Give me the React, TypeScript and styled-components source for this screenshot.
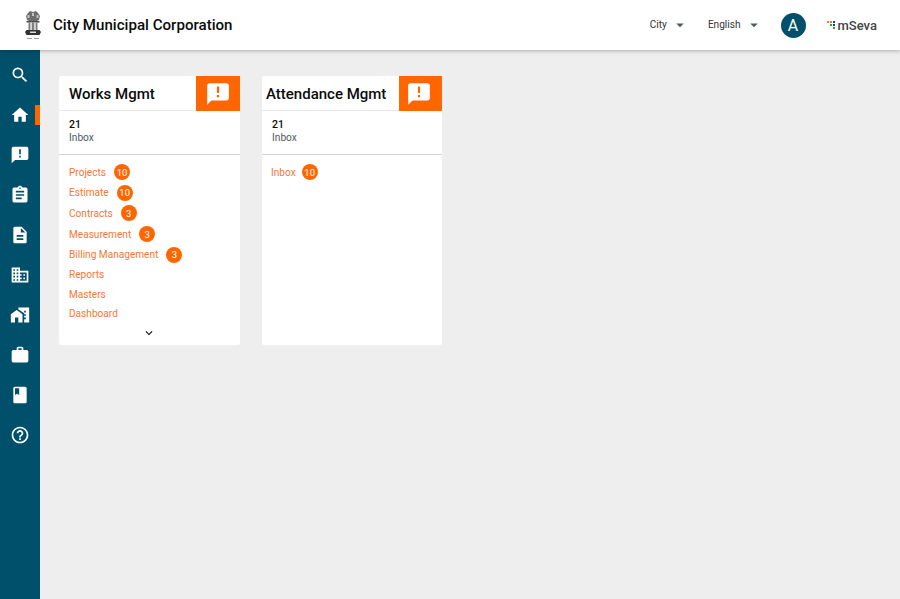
import styled, { createGlobalStyle } from 'styled-components'
import {
  MdSearch,
  MdHome,
  MdAnnouncement,
  MdAssignment,
  MdDescription,
  MdBusiness,
  MdHomeWork,
  MdWork,
  MdBook,
  MdHelpOutline,
  MdArrowDropDown,
  MdKeyboardArrowDown,
} from 'react-icons/md'

const GlobalStyle = createGlobalStyle`
  html, body {
    margin: 0;
    padding: 0;
    height: 100%;
    overflow: hidden;
    background: #eeeeee;
    font-family: Roboto, "Liberation Sans", sans-serif;
  }
  #root {
    height: 100%;
  }
  * {
    box-sizing: border-box;
  }
`

const Page = styled.div`
  display: flex;
  flex-direction: column;
  height: 599px;
`

const Header = styled.header`
  position: relative;
  z-index: 2;
  flex: 0 0 50px;
  display: flex;
  align-items: center;
  background: #fff;
  box-shadow: 0 1px 4px rgba(0, 0, 0, 0.28);
  padding: 0 23px 0 23px;
`

const Brand = styled.div`
  display: flex;
  align-items: center;
  gap: 10px;
  flex: 1;
`

const CityName = styled.h1`
  margin: 0 0 1px;
  font-size: 15.1px;
  font-weight: 500;
  color: #0b0c0c;
`

const Dropdown = styled.div<{ $gap: number }>`
  display: flex;
  align-items: center;
  margin: 0 ${({ $gap }) => $gap}px 1px 0;
  font-size: 10.1px;
  color: #333;

  svg {
    margin-left: 4px;
    color: #505a5f;
  }
`

const Avatar = styled.div`
  width: 25px;
  height: 25px;
  border-radius: 50%;
  background: #00506b;
  color: #fff;
  font-size: 16px;
  display: flex;
  align-items: center;
  justify-content: center;
  margin-right: 21px;
`

const MSeva = styled.div`
  display: flex;
  align-items: center;
  gap: 2px;
  font-size: 13px;
  font-weight: 500;
  color: #444;
`

const Body = styled.div`
  flex: 1;
  display: flex;
  min-height: 0;
`

const Sidebar = styled.nav`
  flex: 0 0 40px;
  background: #00506b;
  display: flex;
  flex-direction: column;
  padding-top: 5px;
`

const NavItem = styled.div<{ $active?: boolean }>`
  position: relative;
  height: 40px;
  display: flex;
  align-items: center;
  justify-content: center;
  color: #fff;
  font-size: 20px;

  ${({ $active }) =>
    $active &&
    `
    &::after {
      content: '';
      position: absolute;
      right: 0;
      top: 10px;
      width: 5px;
      height: 20px;
      background: #ff6600;
    }
  `}
`

const Main = styled.main`
  flex: 1;
  display: flex;
  align-items: flex-start;
  gap: 22px;
  padding: 26px 19px;
`

const Card = styled.section`
  width: 180.5px;
  height: 269px;
  background: #fff;
  border-radius: 2px;
  display: flex;
  flex-direction: column;
`

const CardHead = styled.div`
  flex: 0 0 35px;
  display: flex;
  align-items: flex-start;
  justify-content: space-between;
  border-bottom: 1px solid #e8e8e8;
`

const CardTitle = styled.h2<{ $inset: number }>`
  margin: 0;
  padding: 3px 0 0 ${({ $inset }) => $inset}px;
  font-size: 15px;
  line-height: 30px;
  font-weight: 500;
  color: #0b0c0c;
  white-space: nowrap;
`

const AlertTile = styled.div<{ $nudge?: number }>`
  flex: 0 0 43.5px;
  height: 35px;
  margin-bottom: -1px;
  padding-right: ${({ $nudge }) => $nudge ?? 0}px;
  background: #ff6600;
  color: #fff;
  display: flex;
  align-items: center;
  justify-content: center;
  font-size: 26px;
`

const Kpi = styled.div<{ $inset: number }>`
  flex: 0 0 44px;
  padding: 8px 0 0 ${({ $inset }) => $inset}px;
  border-bottom: 1px solid #d6d5d4;
`

const KpiValue = styled.div`
  font-size: 10.5px;
  line-height: 12px;
  font-weight: 500;
  color: #0b0c0c;
`

const KpiLabel = styled.div`
  font-size: 10.2px;
  line-height: 14px;
  color: #505a5f;
`

const Links = styled.ul<{ $inset: number }>`
  list-style: none;
  margin: 0;
  padding: 7px 0 0 ${({ $inset }) => $inset}px;
`

const LinkRow = styled.li<{ $tall?: boolean }>`
  display: flex;
  align-items: center;
  height: ${({ $tall }) => ($tall ? 20.6 : 19.4)}px;
`

const LinkText = styled.a`
  font-size: 10.1px;
  color: #f47738;
`

const Count = styled.span<{ $offset: number }>`
  width: 16px;
  height: 16px;
  margin-left: ${({ $offset }) => $offset}px;
  border-radius: 50%;
  background: #ff6600;
  color: #fff;
  font-size: 9.5px;
  display: flex;
  align-items: center;
  justify-content: center;
`

const More = styled.div`
  display: flex;
  justify-content: center;
  margin-top: 3px;
  font-size: 14px;
  color: #0b0c0c;
`

// small state emblem, only as much detail as the header logo shows at this size
const Emblem = () => (
  <svg width="20" height="31" viewBox="0 0 20 31">
    <path d="M5 3l2-2 3 1 3-1 2 2 2 3-1 4-2 1H6l-2-1-1-4z" fill="#6e6e6e" />
    <path d="M4.5 5h2v3h-2zM9 3h2v3H9zM13.5 5h2v3h-2z" fill="#c4c4c4" />
    <path d="M3.5 11h13v1.5h-13z" fill="#4a4a4a" />
    <path d="M5.5 12.5h2v7.5h-2zM9 12.5h2V20H9zM12.5 12.5h2V20h-2z" fill="#7d7d7d" />
    <path d="M7.5 12.5H9V20H7.5zM11 12.5h1.500V20H11z" fill="#d4d4d4" />
    <path d="M3.500 20h13l1.500 2-1.500 3h-13L2 22z" fill="#333" />
    <path d="M7 21.500h6V23H7z" fill="#dcdcdc" />
    <path d="M4 28h5v1H4zM11 28h5v1h-5z" fill="#a0a0a0" />
  </svg>
)

const MSevaMark = () => (
  <svg width="9" height="9" viewBox="0 0 9 9">
    <rect x="0" y="0" width="2" height="2" fill="#f47738" />
    <rect x="3" y="0" width="2" height="2" fill="#f47738" />
    <rect x="6" y="0" width="2" height="2" fill="#00506b" />
    <rect x="3" y="3" width="2" height="2" fill="#2e9e5b" />
    <rect x="6" y="3" width="2" height="2" fill="#00506b" />
    <rect x="6" y="6" width="2" height="2" fill="#2e9e5b" />
  </svg>
)

const navIcons = [
  { icon: <MdSearch />, id: 'search' },
  { icon: <MdHome />, id: 'home', active: true },
  { icon: <MdAnnouncement />, id: 'complaints' },
  { icon: <MdAssignment />, id: 'tasks' },
  { icon: <MdDescription />, id: 'docs' },
  { icon: <MdBusiness />, id: 'org' },
  { icon: <MdHomeWork />, id: 'property' },
  { icon: <MdWork />, id: 'work' },
  { icon: <MdBook />, id: 'book' },
  { icon: <MdHelpOutline />, id: 'help' },
]

const worksLinks = [
  { label: 'Projects', count: 10 },
  { label: 'Estimate', count: 10 },
  { label: 'Contracts', count: 3 },
  { label: 'Measurement', count: 3 },
  { label: 'Billing Management', count: 3 },
  { label: 'Reports' },
  { label: 'Masters' },
  { label: 'Dashboard' },
]

const App = () => (
  <Page>
    <GlobalStyle />
    <Header>
      <Brand>
        <Emblem />
        <CityName>City Municipal Corporation</CityName>
      </Brand>
      <Dropdown $gap={19}>
        City
        <MdArrowDropDown size={18} />
      </Dropdown>
      <Dropdown $gap={18}>
        English
        <MdArrowDropDown size={18} />
      </Dropdown>
      <Avatar>A</Avatar>
      <MSeva>
        <MSevaMark />
        mSeva
      </MSeva>
    </Header>
    <Body>
      <Sidebar>
        {navIcons.map((item) => (
          <NavItem key={item.id} $active={item.active}>
            {item.icon}
          </NavItem>
        ))}
      </Sidebar>
      <Main>
        <Card>
          <CardHead>
            <CardTitle $inset={10}>Works Mgmt</CardTitle>
            <AlertTile>
              <MdAnnouncement />
            </AlertTile>
          </CardHead>
          <Kpi $inset={10}>
            <KpiValue>21</KpiValue>
            <KpiLabel>Inbox</KpiLabel>
          </Kpi>
          <Links $inset={10}>
            {worksLinks.map((link) => (
              <LinkRow key={link.label} $tall={link.count !== undefined}>
                <LinkText>{link.label}</LinkText>
                {link.count !== undefined && <Count $offset={8}>{link.count}</Count>}
              </LinkRow>
            ))}
          </Links>
          <More>
            <MdKeyboardArrowDown />
          </More>
        </Card>
        <Card>
          <CardHead>
            <CardTitle $inset={4.5}>Attendance Mgmt</CardTitle>
            <AlertTile $nudge={3}>
              <MdAnnouncement />
            </AlertTile>
          </CardHead>
          <Kpi $inset={10.5}>
            <KpiValue>21</KpiValue>
            <KpiLabel>Inbox</KpiLabel>
          </Kpi>
          <Links $inset={9.5}>
            <LinkRow $tall>
              <LinkText>Inbox</LinkText>
              <Count $offset={6}>10</Count>
            </LinkRow>
          </Links>
        </Card>
      </Main>
    </Body>
  </Page>
)

export default App
